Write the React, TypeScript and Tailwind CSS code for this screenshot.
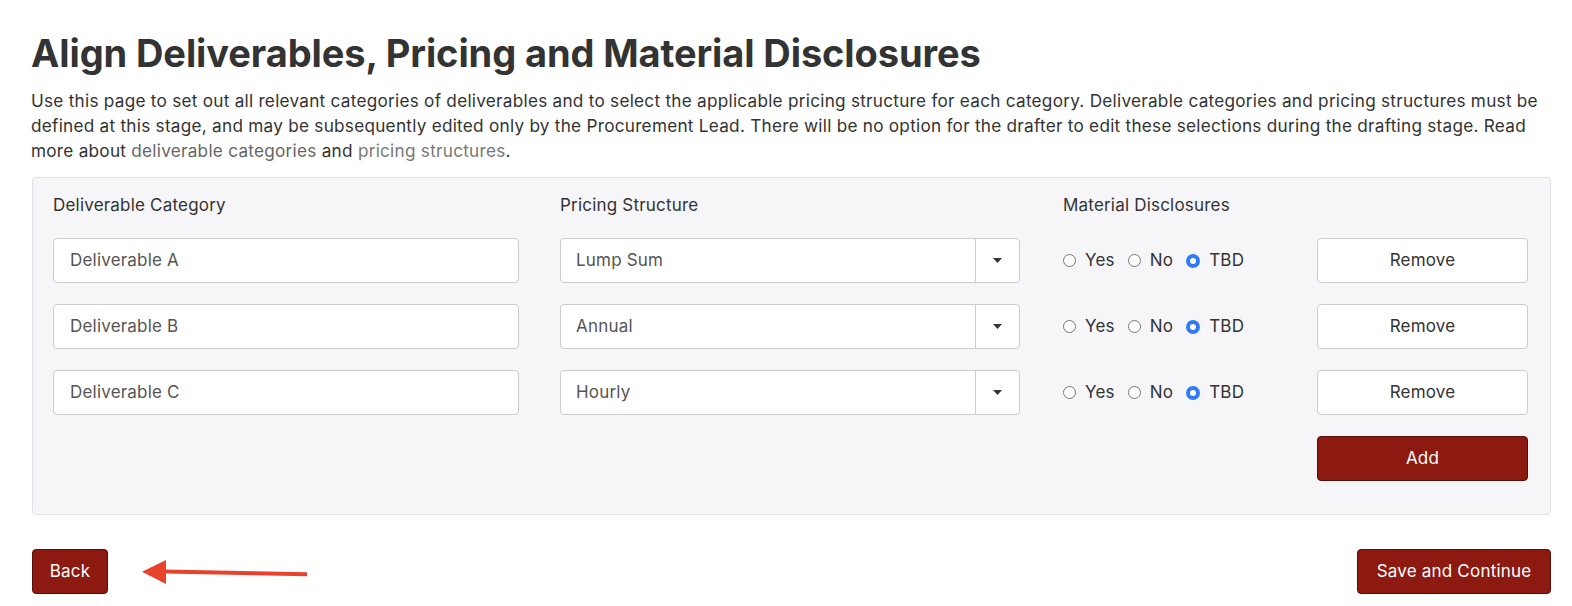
import React from 'react';

interface Deliverable {
  name: string;
  pricing: string;
  disclosure: 'yes' | 'no' | 'tbd';
}

const rows: Deliverable[] = [
  { name: 'Deliverable A', pricing: 'Lump Sum', disclosure: 'tbd' },
  { name: 'Deliverable B', pricing: 'Annual', disclosure: 'tbd' },
  { name: 'Deliverable C', pricing: 'Hourly', disclosure: 'tbd' },
];

const Radio: React.FC<{ label: string; checked?: boolean }> = ({ label, checked = false }) => (
  <span className="flex items-center">
    {checked ? (
      <span className="w-[14px] h-[14px] rounded-full bg-[#2f7bf5] flex items-center justify-center">
        <span className="w-[6px] h-[6px] rounded-full bg-white" />
      </span>
    ) : (
      <span className="w-[13px] h-[13px] rounded-full border border-[#767676] bg-white" />
    )}
    <span className="ml-[9px]">{label}</span>
  </span>
);

const PricingSelect: React.FC<{ value: string }> = ({ value }) => (
  <div className="flex h-[45px] w-[460px] rounded-[4px] border border-[#cccccc] bg-white">
    <div className="flex-1 flex items-center pl-[15px] text-[#555555]">{value}</div>
    <div className="w-[44px] border-l border-[#cccccc] flex items-center justify-center">
      <svg width="9" height="5" viewBox="0 0 9 5">
        <path d="M0 0h9L4.5 5z" fill="#333333" />
      </svg>
    </div>
  </div>
);

const DeliverableRow: React.FC<{ item: Deliverable }> = ({ item }) => (
  <div className="flex items-center">
    <div className="w-[466px] h-[45px] rounded-[4px] border border-[#cccccc] bg-white flex items-center pl-[16px] text-[#555555]">
      {item.name}
    </div>
    <div className="ml-[41px]">
      <PricingSelect value={item.pricing} />
    </div>
    <div className="ml-[43px] w-[254px] flex items-center gap-[13px]">
      <Radio label="Yes" checked={item.disclosure === 'yes'} />
      <Radio label="No" checked={item.disclosure === 'no'} />
      <Radio label="TBD" checked={item.disclosure === 'tbd'} />
    </div>
    <button className="w-[211px] h-[45px] rounded-[4px] border border-[#cccccc] bg-white text-[#333333]">
      Remove
    </button>
  </div>
);

export default function App() {
  return (
    <div className="min-h-[606px] bg-white text-[#333333] font-['Inter','Liberation_Sans',sans-serif] text-[17px] leading-[25px] tracking-[0.2px]">
      <div className="ml-[31px] w-[1520px] pt-[31px]">
        <h1 className="text-[38px] leading-[44px] font-bold tracking-[-0.1px] text-[#333333]">
          Align Deliverables, Pricing and Material Disclosures
        </h1>
        <p className="mt-[13px] text-[17.2px] tracking-[0.25px]">
          Use this page to set out all relevant categories of deliverables and to select the applicable
          pricing structure for each category. Deliverable categories and pricing structures must be
          defined at this stage, and may be subsequently edited only by the Procurement Lead. There
          will be no option for the drafter to edit these selections during the drafting stage. Read
          more about <a className="text-[#666666]">deliverable categories</a> and{' '}
          <a className="text-[#777777]">pricing structures</a>.
        </p>

        <div className="mt-[14px] ml-[1px] w-[1519px] rounded-[4px] border border-[#e1e1e5] bg-[#f6f6f8] pl-[20px] pt-[15px] pb-[33px]">
          <div className="flex">
            <div className="w-[466px]">Deliverable Category</div>
            <div className="ml-[41px] w-[460px]">Pricing Structure</div>
            <div className="ml-[43px]">Material Disclosures</div>
          </div>
          <div className="mt-[20px] flex flex-col gap-[21px]">
            {rows.map((r) => (
              <DeliverableRow key={r.name} item={r} />
            ))}
          </div>
          <div className="mt-[21px] flex">
            <button className="ml-[1264px] w-[211px] h-[45px] rounded-[4px] border border-[#5a0e09] bg-[#8c1a11] text-white">
              Add
            </button>
          </div>
        </div>

        <div className="mt-[34px] flex items-center">
          <button className="ml-[1px] w-[76px] h-[45px] rounded-[4px] border border-[#5a0e09] bg-[#8c1a11] text-white">
            Back
          </button>
          <svg className="ml-[34px]" width="166" height="26" viewBox="0 0 166 26">
            <path d="M22 10.6 L165 13.2 L165 17.2 L22 14.6 Z" fill="#e8412c" />
            <path d="M0 12.7 L24 1 L24 25 Z" fill="#e8412c" />
          </svg>
          <button className="ml-auto w-[194px] h-[45px] rounded-[4px] border border-[#5a0e09] bg-[#8c1a11] text-white">
            Save and Continue
          </button>
        </div>
      </div>
    </div>
  );
}
